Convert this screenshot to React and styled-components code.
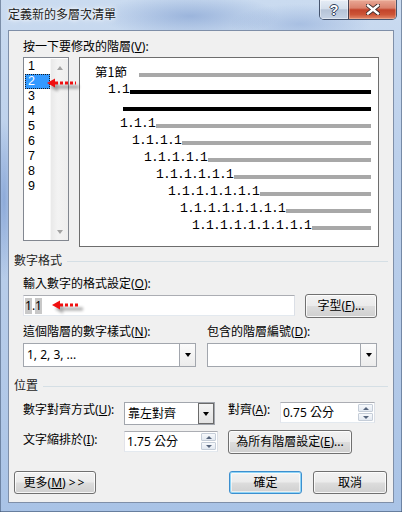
import React from "react";
import styled, { createGlobalStyle, css } from "styled-components";

const GlobalStyle = createGlobalStyle`
  html, body {
    margin: 0;
    padding: 0;
  }
  body {
    font-family: "Noto Sans", "Noto Sans CJK TC", sans-serif;
    font-size: 12px;
    color: #000;
  }
`;

const Window = styled.div`
  position: relative;
  width: 402px;
  height: 512px;
  box-sizing: border-box;
  display: flex;
  flex-direction: column;
  padding: 0 8px 9px;
  overflow: hidden;
  background:
    radial-gradient(ellipse 90px 22px at 190px 16px, rgba(118, 150, 204, 0.55), transparent),
    radial-gradient(ellipse 70px 20px at 300px 24px, rgba(130, 160, 210, 0.45), transparent),
    radial-gradient(ellipse 10px 80px at 4px 200px, rgba(110, 145, 205, 0.6), transparent),
    linear-gradient(180deg, #cadbf0 0%, #bcd0eb 30%, #b4cae8 70%, #a9c3e6 100%);
  box-shadow: inset 1px 0 0 rgba(60, 80, 110, 0.55), inset -1px 0 0 rgba(60, 80, 110, 0.55),
    inset 0 -1px 0 rgba(60, 80, 110, 0.6);
`;

const TitleBar = styled.div`
  height: 30px;
  display: flex;
  align-items: flex-start;
  flex: none;
`;

const Title = styled.div`
  margin-top: 7px;
  line-height: 14px;
  font-family: "Noto Sans CJK TC", sans-serif;
  font-size: 12px;
  color: #1b1b1b;
  text-shadow: 0 0 6px #fff, 0 0 3px rgba(255, 255, 255, 0.9);
`;

const CaptionButtons = styled.div`
  margin-left: auto;
  margin-right: -3px;
  height: 20px;
  display: flex;
  box-sizing: border-box;
  border: 1px solid rgba(38, 52, 78, 0.8);
  border-top: none;
  border-radius: 0 0 5px 5px;
  overflow: hidden;
`;

const HelpButton = styled.div`
  width: 28px;
  display: flex;
  align-items: center;
  justify-content: center;
  background: linear-gradient(180deg, #e6edf6 0%, #d4deeb 45%, #b5c3d7 52%, #c6d3e5 100%);
  box-shadow: inset 0 0 0 1px rgba(255, 255, 255, 0.45);
  font-family: "Liberation Sans", sans-serif;
  font-weight: bold;
  font-size: 14px;
  color: #fff;
  text-shadow: 1px 0 0 #33425c, -1px 0 0 #33425c, 0 1px 0 #33425c, 0 -1px 0 #33425c;
`;

const CloseButton = styled.div`
  width: 47px;
  display: flex;
  align-items: center;
  justify-content: center;
  border-left: 1px solid rgba(38, 52, 78, 0.8);
  background: linear-gradient(180deg, #e9a896 0%, #da826d 42%, #c2432b 52%, #cc5436 76%, #e2896c 100%);
  box-shadow: inset 0 0 0 1px rgba(255, 220, 200, 0.35);
`;

const Client = styled.div`
  flex: 1;
  box-sizing: border-box;
  display: flex;
  flex-direction: column;
  padding: 0 14px 8px;
  background: #f0f0f0;
  border: 1px solid #7f8fa8;
`;

const Text = styled.div`
  line-height: 14px;
  margin-top: ${(p) => p.$mt || 0}px;
  white-space: nowrap;
`;

const GroupHeader = styled.div`
  display: flex;
  align-items: center;
  margin: ${(p) => p.$mt}px -9px 0;
  line-height: 14px;
  color: #1e1e1e;

  &::after {
    content: "";
    flex: 1;
    height: 1px;
    margin-left: 5px;
    background: #d5dfe5;
  }
`;

/* level picker + preview */

const TopRow = styled.div`
  display: flex;
  align-items: flex-start;
  gap: 10px;
  margin-top: 3px;
`;

const LevelList = styled.div`
  width: 46px;
  height: 184px;
  box-sizing: border-box;
  display: flex;
  padding: 1px 0 0 1px;
  border: 1px solid #828790;
  background: #fff;
`;

const LevelItems = styled.div`
  width: 26px;
  display: flex;
  flex-direction: column;
`;

const LevelItem = styled.div`
  height: 15px;
  line-height: 15px;
  padding-left: 3px;
  box-sizing: border-box;
  font-family: "Liberation Sans", sans-serif;
  font-size: 12.5px;
  color: #000;
  ${(p) =>
    p.$selected &&
    css`
      background: #3399ff;
      color: #fff;
      outline: 1px dotted #1a1a1a;
      outline-offset: -1px;
    `}
`;

const ScrollTrack = styled.div`
  margin-left: auto;
  width: 17px;
  display: flex;
  flex-direction: column;
  justify-content: space-between;
  background: linear-gradient(90deg, #e9e9e9 0%, #f3f3f3 40%, #eeeeee 100%);
  border-left: 1px solid #f7f7f7;
`;

const ScrollArrow = styled.div`
  height: 17px;
  display: flex;
  align-items: center;
  justify-content: center;

  &::after {
    content: "";
    border-left: 3.5px solid transparent;
    border-right: 3.5px solid transparent;
    ${(p) => (p.$down ? "border-top: 4px solid #a3a3a3;" : "border-bottom: 4px solid #a3a3a3;")}
  }
`;

const Preview = styled.div`
  width: 300px;
  height: 190px;
  box-sizing: border-box;
  display: flex;
  flex-direction: column;
  padding: 6px 7px 0 0;
  border: 1px solid #6d6d6d;
  background: #fff;
`;

const PreviewRow = styled.div`
  height: 17px;
  display: flex;
  align-items: center;
  padding-left: ${(p) => p.$indent}px;
`;

const LevelText = styled.span`
  flex: none;
  width: ${(p) => p.$w}px;
  font-family: "Liberation Mono", "Noto Sans CJK TC", monospace;
  font-size: 13px;
  letter-spacing: -0.8px;
  line-height: 17px;
  white-space: nowrap;
  color: #000;
`;

const CjkText = styled.span`
  font-family: "Noto Sans CJK TC", sans-serif;
  font-size: 12.5px;
  letter-spacing: 0;
`;

const LevelBar = styled.div`
  flex: 1;
  height: 4px;
  margin-top: 4px;
  background: ${(p) => (p.$active ? "#000" : "#a8a8a8")};
`;

/* number format */

const FormatRow = styled.div`
  display: flex;
  align-items: flex-start;
  gap: 10px;
  margin-top: 3px;
`;

const TextField = styled.div`
  width: 272px;
  height: 21px;
  margin-top: 1px;
  box-sizing: border-box;
  display: flex;
  align-items: center;
  padding-left: 1px;
  border: 1px solid #abadb3;
  border-color: #abadb3 #dbdfe6 #e3e9ef #e2e3ea;
  background: #fff;
  line-height: 14px;
`;

const FieldShade = styled.span`
  background: #c8c8c8;
  padding: 1px 0;
`;

const Button = styled.button`
  width: ${(p) => p.$w}px;
  height: ${(p) => p.$h || 23}px;
  box-sizing: border-box;
  padding: 0;
  border: 1px solid #707070;
  border-radius: 3px;
  background: linear-gradient(180deg, #f2f2f2 0%, #ebebeb 49%, #dddddd 51%, #cfcfcf 100%);
  box-shadow: inset 0 0 0 1px rgba(255, 255, 255, 0.8);
  font: inherit;
  line-height: 14px;
  color: #000;
  white-space: nowrap;
  ${(p) =>
    p.$default &&
    css`
      border-color: #3c8fcf;
      box-shadow: inset 0 0 0 1px #8fd4f6, inset 0 0 0 2px rgba(255, 255, 255, 0.6);
    `}
`;

const PairGrid = styled.div`
  display: grid;
  grid-template-columns: 184px 170px;
  row-gap: 4px;
  margin-top: 7px;
`;

const Combo = styled.div`
  width: ${(p) => p.$w}px;
  height: ${(p) => p.$h || 24}px;
  box-sizing: border-box;
  display: flex;
  align-items: center;
  border: 1px solid #a2a6ad;
  background: #fff;
`;

const ComboValue = styled.span`
  flex: 1;
  padding-left: 3px;
  line-height: 14px;
  white-space: nowrap;
`;

const DropButton = styled.div`
  width: 16px;
  align-self: stretch;
  box-sizing: border-box;
  display: flex;
  align-items: center;
  justify-content: center;
  border-left: 1px solid #a2a6ad;
  background: linear-gradient(180deg, #fbfbfb 0%, #ececec 100%);
  ${(p) =>
    p.$pressed &&
    css`
      border: 1px solid #6a6a6a;
      background: linear-gradient(180deg, #f4f4f4 0%, #e2e2e2 100%);
    `}

  &::after {
    content: "";
    border-left: 3.5px solid transparent;
    border-right: 3.5px solid transparent;
    border-top: 4px solid #000;
  }
`;

/* position */

const PositionGrid = styled.div`
  display: grid;
  grid-template-columns: 101px 104px 52px 1fr;
  row-gap: 5px;
  align-items: start;
  margin-top: 9px;
`;

const SpinBox = styled.div`
  width: ${(p) => p.$w}px;
  height: 21px;
  margin-top: ${(p) => p.$mt || 0}px;
  box-sizing: border-box;
  display: flex;
  align-items: center;
  border: 1px solid #abadb3;
  border-color: #abadb3 #dbdfe6 #e3e9ef #e2e3ea;
  background: #fff;
`;

const SpinValue = styled.span`
  flex: 1;
  padding-left: 2px;
  line-height: 14px;
  white-space: nowrap;
`;

const SpinArrows = styled.div`
  width: 16px;
  align-self: stretch;
  box-sizing: border-box;
  display: flex;
  flex-direction: column;
  gap: 1px;
  padding: 1px 1px 1px 0;
`;

const SpinStep = styled.div`
  flex: 1;
  display: flex;
  align-items: center;
  justify-content: center;
  border: 1px solid #c5cdd8;
  border-radius: 1px;
  background: linear-gradient(180deg, #f7f9fc 0%, #e3e9f1 100%);

  &::after {
    content: "";
    border-left: 3px solid transparent;
    border-right: 3px solid transparent;
    ${(p) => (p.$down ? "border-top: 3px solid #56657d;" : "border-bottom: 3px solid #56657d;")}
  }
`;

const WideCell = styled.div`
  grid-column: 3 / span 2;
`;

const Footer = styled.div`
  display: flex;
  margin: 17px -8px 0 -9px;
`;

const PushRight = styled.div`
  margin-left: auto;
  display: flex;
  gap: 11px;
`;

const Chevrons = styled.span`
  letter-spacing: 2px;
  margin-left: 3px;
`;

const ArrowMark = styled.svg`
  position: absolute;
  left: ${(p) => p.$x}px;
  top: ${(p) => p.$y}px;
  overflow: visible;
`;

function RedArrow({ id, tipX, tipY, length }) {
  const end = 10 + length;
  return (
    <ArrowMark $x={tipX - 2} $y={tipY - 7} width={end + 8} height="20" viewBox={`0 0 ${end + 8} 20`}>
      <defs>
        <filter id={id} x="-20%" y="-50%" width="140%" height="200%">
          <feGaussianBlur stdDeviation="1.6" />
        </filter>
      </defs>
      <g transform="translate(3 4)" fill="#000" opacity="0.35" filter={`url(#${id})`}>
        <polygon points="2,7 10,2.5 10,11.5" />
        <rect x="10" y="5.5" width={length} height="3" />
      </g>
      <polygon points="2,7 10,2.5 10,11.5" fill="#f01010" />
      <line x1="10" y1="7" x2={end} y2="7" stroke="#f01010" strokeWidth="3" strokeDasharray="3 2" />
    </ArrowMark>
  );
}

const previewRows = [
  { indent: 15, w: 44, label: <CjkText>第1節</CjkText> },
  { indent: 28, w: 22, label: "1.1", active: true },
  { indent: 43, w: 0, label: "", active: true },
  { indent: 40, w: 36, label: "1.1.1" },
  { indent: 52, w: 50, label: "1.1.1.1" },
  { indent: 64, w: 64, label: "1.1.1.1.1" },
  { indent: 76, w: 78, label: "1.1.1.1.1.1" },
  { indent: 88, w: 92, label: "1.1.1.1.1.1.1" },
  { indent: 100, w: 106, label: "1.1.1.1.1.1.1.1" },
  { indent: 112, w: 120, label: "1.1.1.1.1.1.1.1.1" },
];

const levels = ["1", "2", "3", "4", "5", "6", "7", "8", "9"];

export default function App() {
  return (
    <>
      <GlobalStyle />
      <Window>
        <TitleBar>
          <Title>定義新的多層次清單</Title>
          <CaptionButtons>
            <HelpButton>?</HelpButton>
            <CloseButton>
              <svg width="14" height="11" viewBox="0 0 14 11">
                <path d="M2 1.5 L12 9.5 M12 1.5 L2 9.5" stroke="#3a2a2a" strokeWidth="4.2" strokeLinecap="square" />
                <path d="M2 1.5 L12 9.5 M12 1.5 L2 9.5" stroke="#fff" strokeWidth="2.4" strokeLinecap="square" />
              </svg>
            </CloseButton>
          </CaptionButtons>
        </TitleBar>

        <Client>
          <Text $mt={9}>
            按一下要修改的階層(<u>V</u>):
          </Text>
          <TopRow>
            <LevelList>
              <LevelItems>
                {levels.map((n) => (
                  <LevelItem key={n} $selected={n === "2"}>
                    {n}
                  </LevelItem>
                ))}
              </LevelItems>
              <ScrollTrack>
                <ScrollArrow />
                <ScrollArrow $down />
              </ScrollTrack>
            </LevelList>
            <Preview>
              {previewRows.map((row, i) => (
                <PreviewRow key={i} $indent={row.indent}>
                  <LevelText $w={row.w}>{row.label}</LevelText>
                  <LevelBar $active={row.active} />
                </PreviewRow>
              ))}
            </Preview>
          </TopRow>

          <GroupHeader $mt={7}>數字格式</GroupHeader>
          <Text $mt={9}>
            輸入數字的格式設定(<u>O</u>):
          </Text>
          <FormatRow>
            <TextField>
              <FieldShade>1</FieldShade>.<FieldShade>1</FieldShade>
            </TextField>
            <Button $w={72} $h={24}>
              字型(<u>F</u>)...
            </Button>
          </FormatRow>
          <PairGrid>
            <Text>
              這個階層的數字樣式(<u>N</u>):
            </Text>
            <Text>
              包含的階層編號(<u>D</u>):
            </Text>
            <Combo $w={173}>
              <ComboValue>1, 2, 3, ...</ComboValue>
              <DropButton />
            </Combo>
            <Combo $w={170}>
              <ComboValue />
              <DropButton />
            </Combo>
          </PairGrid>

          <GroupHeader $mt={12}>位置</GroupHeader>
          <PositionGrid>
            <Text $mt={1}>
              數字對齊方式(<u>U</u>):
            </Text>
            <Combo $w={91} $h={23}>
              <ComboValue>靠左對齊</ComboValue>
              <DropButton $pressed />
            </Combo>
            <Text $mt={1}>
              對齊(<u>A</u>):
            </Text>
            <SpinBox $w={95}>
              <SpinValue>0.75 公分</SpinValue>
              <SpinArrows>
                <SpinStep />
                <SpinStep $down />
              </SpinArrows>
            </SpinBox>

            <Text $mt={3}>
              文字縮排於(<u>I</u>):
            </Text>
            <SpinBox $w={94} $mt={1}>
              <SpinValue>1.75 公分</SpinValue>
              <SpinArrows>
                <SpinStep />
                <SpinStep $down />
              </SpinArrows>
            </SpinBox>
            <WideCell>
              <Button $w={124} $h={24}>
                為所有階層設定(<u>E</u>)...
              </Button>
            </WideCell>
          </PositionGrid>

          <Footer>
            <Button $w={82}>
              更多(<u>M</u>)<Chevrons>&gt;&gt;</Chevrons>
            </Button>
            <PushRight>
              <Button $w={73} $default>
                確定
              </Button>
              <Button $w={74}>取消</Button>
            </PushRight>
          </Footer>
        </Client>

        <RedArrow id="arrowShadowA" tipX={47} tipY={83} length={21} />
        <RedArrow id="arrowShadowB" tipX={52} tipY={305} length={20} />
      </Window>
    </>
  );
}
